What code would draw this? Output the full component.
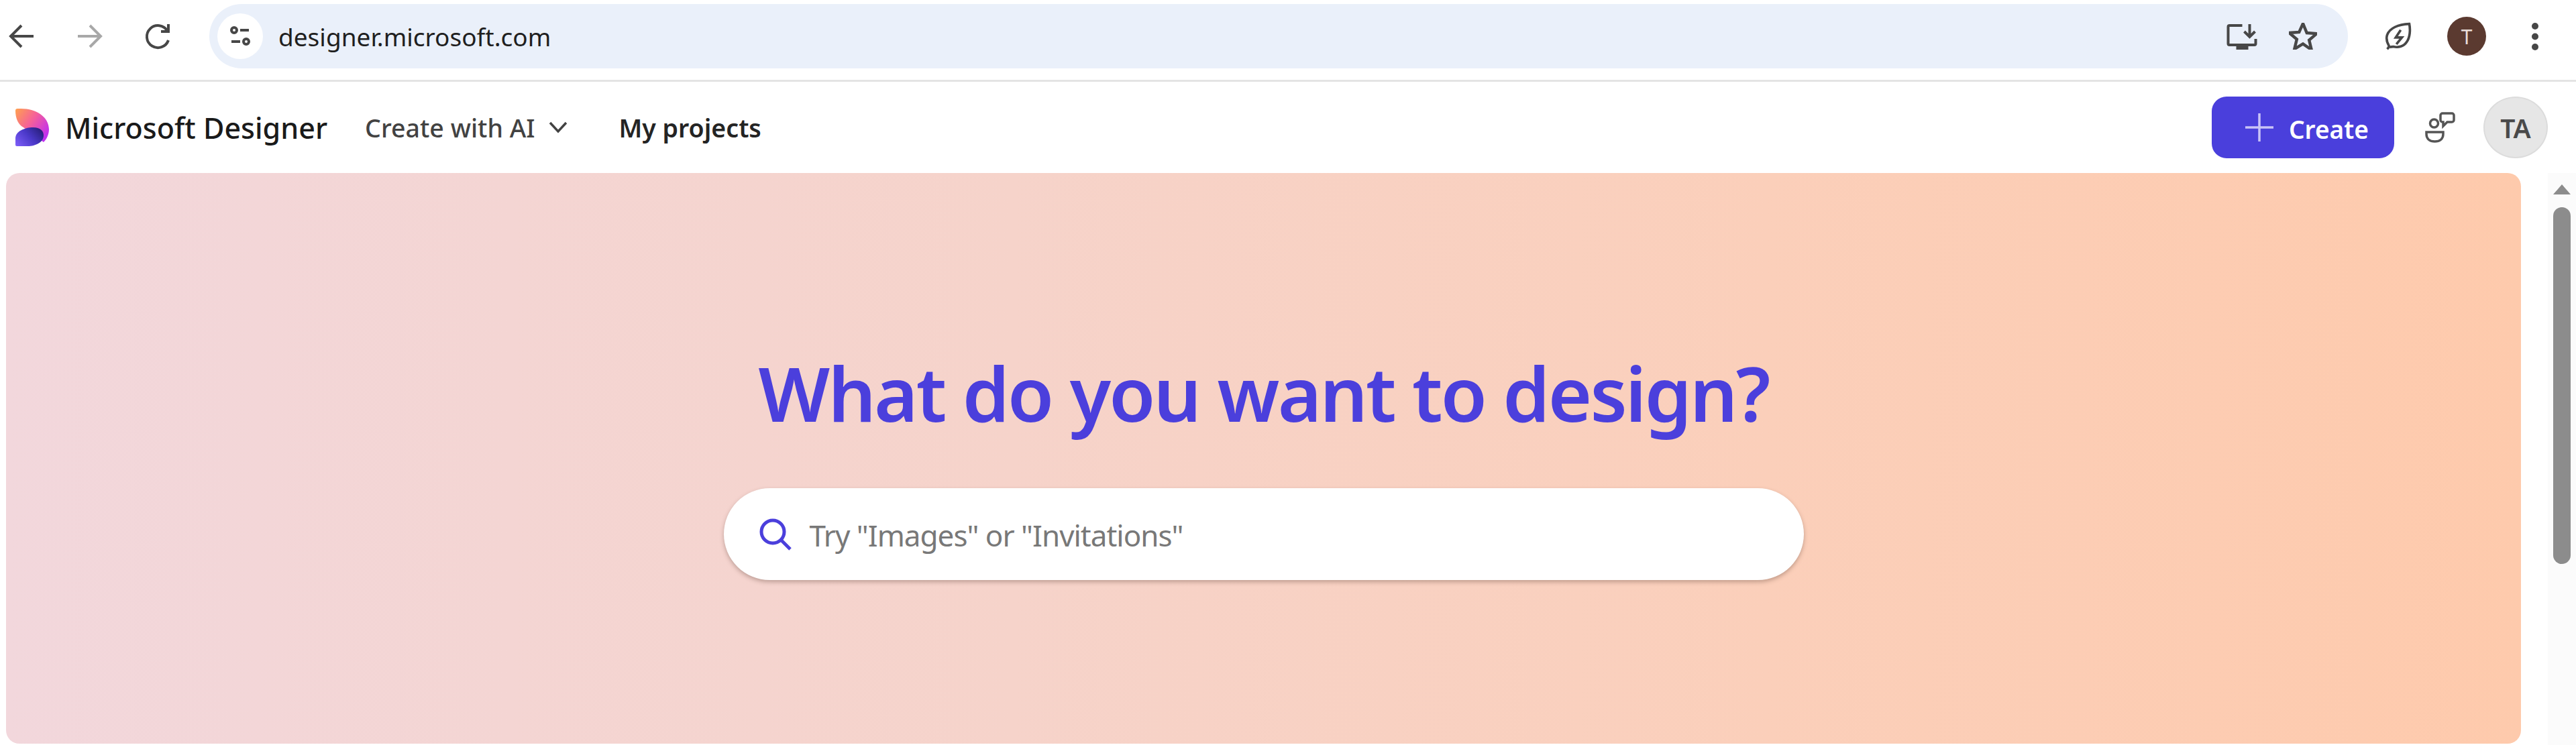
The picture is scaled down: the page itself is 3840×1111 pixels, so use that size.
<script>
  const navItems = ["Create with AI", "My projects"];
</script>

<div class="page">
  <div class="chrome">
    <button class="nav-btn" aria-label="Back">
      <svg width="48" height="48" viewBox="0 0 48 48"><path d="M41 24H8M23 8 7 24l16 16" /></svg>
    </button>
    <button class="nav-btn disabled" aria-label="Forward">
      <svg width="48" height="48" viewBox="0 0 48 48"><path d="M6 24h33M24 8l16 16-16 16" /></svg>
    </button>
    <button class="nav-btn" aria-label="Reload">
      <svg width="48" height="48" viewBox="0 0 48 48"><path d="M40 30a16.500 16.500 0 1 1-1.500-14M40 6v11H29" /></svg>
    </button>
    <div class="omnibox">
      <div class="site-icon">
        <svg width="40" height="40" viewBox="0 0 40 40"><circle cx="11" cy="11" r="4" /><path d="M20 11h13M7 28h13" /><circle cx="29" cy="28" r="4" /></svg>
      </div>
      <span class="url">designer.microsoft.com</span>
      <div class="omni-actions">
        <svg width="46" height="41" viewBox="2 3 45 41"><path d="M25 7H6a2 2 0 0 0-2 2v25a2 2 0 0 0 2 2h37a2 2 0 0 0 2-2v-7" /><path d="M36 5v19M28 16l8 8 8-8" /><path class="solid" d="M16 37h18v6H16z" /></svg>
        <svg width="42" height="40" viewBox="4 5 38 36"><path d="m23 6 5.200 12.500 13.300 1-10.200 8.700 3.200 13.100L23 33.300 11.500 40.300l3.200-13.100L4.500 18.500l13.300-1z" /></svg>
      </div>
    </div>
    <div class="chrome-right">
      <svg class="leaf" width="42" height="44" viewBox="0 0 44 48"><path d="M4 45c2-2 3-3 3-5C3 33 2 28 4 22 8 11 22 5 40 4c2 10 1 22-4 29-5 8-14 10-22 8-2 0-4 0-6 1" /><path d="M26 14l-8 12h10l-9 11" /></svg>
      <div class="profile">T</div>
      <svg class="dots" width="12" height="43" viewBox="0 0 12 43"><circle cx="6" cy="6" r="5" /><circle cx="6" cy="21.500" r="5" /><circle cx="6" cy="37" r="5" /></svg>
    </div>
  </div>

  <header class="app-header">
    <svg class="logo" width="50" height="56" viewBox="0 0 50 56">
      <defs>
        <linearGradient id="logoTop" x1="0" y1="0" x2="1" y2="0.7">
          <stop offset="0" stop-color="#ffa14e" />
          <stop offset="0.5" stop-color="#f5609a" />
          <stop offset="1" stop-color="#c030f0" />
        </linearGradient>
        <linearGradient id="logoBottom" x1="0" y1="0.9" x2="1" y2="0.3">
          <stop offset="0" stop-color="#7b5cf6" />
          <stop offset="0.55" stop-color="#4a38c8" />
          <stop offset="1" stop-color="#2a2080" />
        </linearGradient>
      </defs>
      <path fill="url(#logoTop)" d="M0 3Q0 0 3 0H8C32 0 50 13 50 31c0 7-3 14-8 19L12 28C4 24 0 14 0 3z" />
      <path fill="url(#logoBottom)" d="M0 54V44C0 34 14 28 26 28c12 0 16 6 16 12 0 10-12 16-24 16H2q-2 0-2-2z" />
    </svg>
    <span class="brand">Microsoft Designer</span>
    <nav class="app-nav">
      <span class="nav-link create-ai">
        {navItems[0]}
        <svg width="28" height="18" viewBox="0 0 28 18"><path d="M2 2l12 13L26 2" /></svg>
      </span>
      <span class="nav-link my-projects">{navItems[1]}</span>
    </nav>
    <div class="header-right">
      <button class="create-btn">
        <svg width="44" height="44" viewBox="0 0 44 44"><path d="M22 1v42M1 22h42" /></svg>
        <span>Create</span>
      </button>
      <svg class="community" width="46" height="46" viewBox="0 0 46 46">
        <circle cx="14.500" cy="17" r="6" />
        <path d="M3 30h25v3c0 7-5 11-12.500 11S3 40 3 33z" />
        <path d="M27 2h14a3 3 0 0 1 3 3v7a3 3 0 0 1-3 3h-7l-6 6v-6h-1a3 3 0 0 1-3-3V5a3 3 0 0 1 3-3z" />
      </svg>
      <div class="avatar">TA</div>
    </div>
  </header>

  <div class="content">
    <main class="hero">
      <h1>What do you want to design?</h1>
      <div class="search">
        <svg width="50" height="50" viewBox="0 0 50 50"><circle cx="21" cy="21" r="17" /><path d="M33 33l14 14" /></svg>
        <span class="placeholder">Try "Images" or "Invitations"</span>
      </div>
    </main>
    <div class="scrollbar">
      <div class="arrow"></div>
      <div class="thumb"></div>
    </div>
  </div>
</div>

<style>
  :global(body) {
    margin: 0;
    background: #fff;
    overflow: hidden;
  }

  .page {
    width: 3840px;
    height: 1111px;
    display: flex;
    flex-direction: column;
    font-family: "Noto Sans", "Open Sans", sans-serif;
    color: #1f1f1f;
  }

  svg {
    display: block;
    flex: none;
    fill: none;
    stroke: #474747;
    stroke-width: 4;
  }

  .logo {
    stroke: none;
  }

  /* browser toolbar */
  .chrome {
    height: 122px;
    flex: none;
    box-sizing: border-box;
    border-bottom: 3px solid #e4e4e4;
    display: flex;
    align-items: center;
    padding: 0 0 11px 9px;
  }

  .nav-btn {
    width: 101px;
    height: 60px;
    padding: 0;
    background: none;
    border: 0;
    display: flex;
    align-items: center;
  }

  .nav-btn.disabled svg {
    stroke: #a8a8a8;
  }

  .omnibox {
    width: 3188px;
    height: 96px;
    box-sizing: border-box;
    background: #eaf0fa;
    border-radius: 48px;
    display: flex;
    align-items: center;
    padding: 0 46px 0 12px;
  }

  .site-icon {
    width: 68px;
    height: 68px;
    border-radius: 50%;
    background: #fff;
    display: flex;
    align-items: center;
    justify-content: center;
  }

  .url {
    margin-left: 23px;
    font-size: 37px;
    color: #1f1f1f;
  }

  .omni-actions {
    margin-left: auto;
    display: flex;
    align-items: center;
    gap: 47px;
  }

  .solid {
    fill: #474747;
    stroke: none;
  }

  .chrome-right {
    display: flex;
    align-items: center;
    margin-left: 54px;
  }

  .profile {
    width: 58px;
    height: 58px;
    margin-left: 52px;
    border-radius: 50%;
    background: #5b3a30;
    color: #e8dcd8;
    font-size: 30px;
    display: flex;
    align-items: center;
    justify-content: center;
  }

  .dots {
    margin-left: 67px;
    fill: #474747;
    stroke: none;
  }

  /* app header */
  .app-header {
    height: 136px;
    flex: none;
    display: flex;
    align-items: center;
    padding: 0 42px 0 23px;
  }

  .brand {
    margin-left: 24px;
    font-size: 43px;
    font-weight: 500;
    color: #1a1a1a;
  }

  .app-nav {
    display: flex;
    align-items: center;
    margin-left: 56px;
  }

  .nav-link {
    display: flex;
    align-items: center;
    font-size: 37.500px;
    font-weight: 500;
    color: #424242;
  }

  .create-ai svg {
    margin-left: 21px;
    stroke: #424242;
    stroke-width: 3.500;
  }

  .my-projects {
    margin-left: 76px;
    font-weight: 600;
    color: #242424;
  }

  .header-right {
    margin-left: auto;
    display: flex;
    align-items: center;
  }

  .create-btn {
    width: 272px;
    height: 92px;
    border: 0;
    border-radius: 22px;
    background: #4a3fdc;
    color: #fff;
    font-family: inherit;
    font-size: 37px;
    font-weight: 600;
    display: flex;
    align-items: center;
    gap: 22px;
    padding: 0 0 0 49px;
  }

  .create-btn span {
    margin-top: 4px;
  }

  .create-btn svg {
    stroke: #c9c4f6;
    stroke-width: 3.500;
  }

  .community {
    margin-left: 45px;
    stroke-width: 3.500;
    stroke: #555;
  }

  .avatar {
    width: 96px;
    height: 92px;
    margin-left: 42px;
    box-sizing: border-box;
    border-radius: 50%;
    background: #e6e6e6;
    border: 2px solid #dcdcdc;
    color: #4a4a4a;
    font-size: 39px;
    font-weight: 600;
    display: flex;
    align-items: center;
    justify-content: center;
  }

  /* hero */
  .content {
    flex: 1;
    display: flex;
    justify-content: space-between;
    padding-left: 9px;
  }

  .hero {
    width: 3749px;
    height: 851px;
    border-radius: 20px;
    background: linear-gradient(90deg, #f2d7dc 0%, #f6d3ca 40%, #fbcfba 70%, #fecaac 100%);
    display: flex;
    flex-direction: column;
    align-items: center;
  }

  h1 {
    margin: 253px 0 0;
    font-size: 112px;
    line-height: 150px;
    font-weight: 600;
    letter-spacing: -2.800px;
    color: #4b3fdc;
  }

  .search {
    width: 1610px;
    height: 137px;
    margin-top: 67px;
    box-sizing: border-box;
    background: #fff;
    border-radius: 69px;
    box-shadow: 0 3px 6px rgba(90, 60, 50, 0.35);
    display: flex;
    align-items: center;
    padding: 0 0 0 52px;
  }

  .search svg {
    stroke: #4b3fdc;
    stroke-width: 5;
  }

  .placeholder {
    margin-left: 26px;
    padding-top: 2px;
    font-size: 44px;
    letter-spacing: -1px;
    color: #787878;
  }

  /* scrollbar */
  .scrollbar {
    width: 42px;
    background: #fbfbfb;
    display: flex;
    flex-direction: column;
    align-items: center;
  }

  .arrow {
    width: 0;
    height: 0;
    margin-top: 17px;
    border-left: 13px solid transparent;
    border-right: 13px solid transparent;
    border-bottom: 15px solid #8c8c8c;
  }

  .thumb {
    width: 26px;
    height: 532px;
    margin-top: 19px;
    border-radius: 13px;
    background: #8c8c8c;
  }
</style>
